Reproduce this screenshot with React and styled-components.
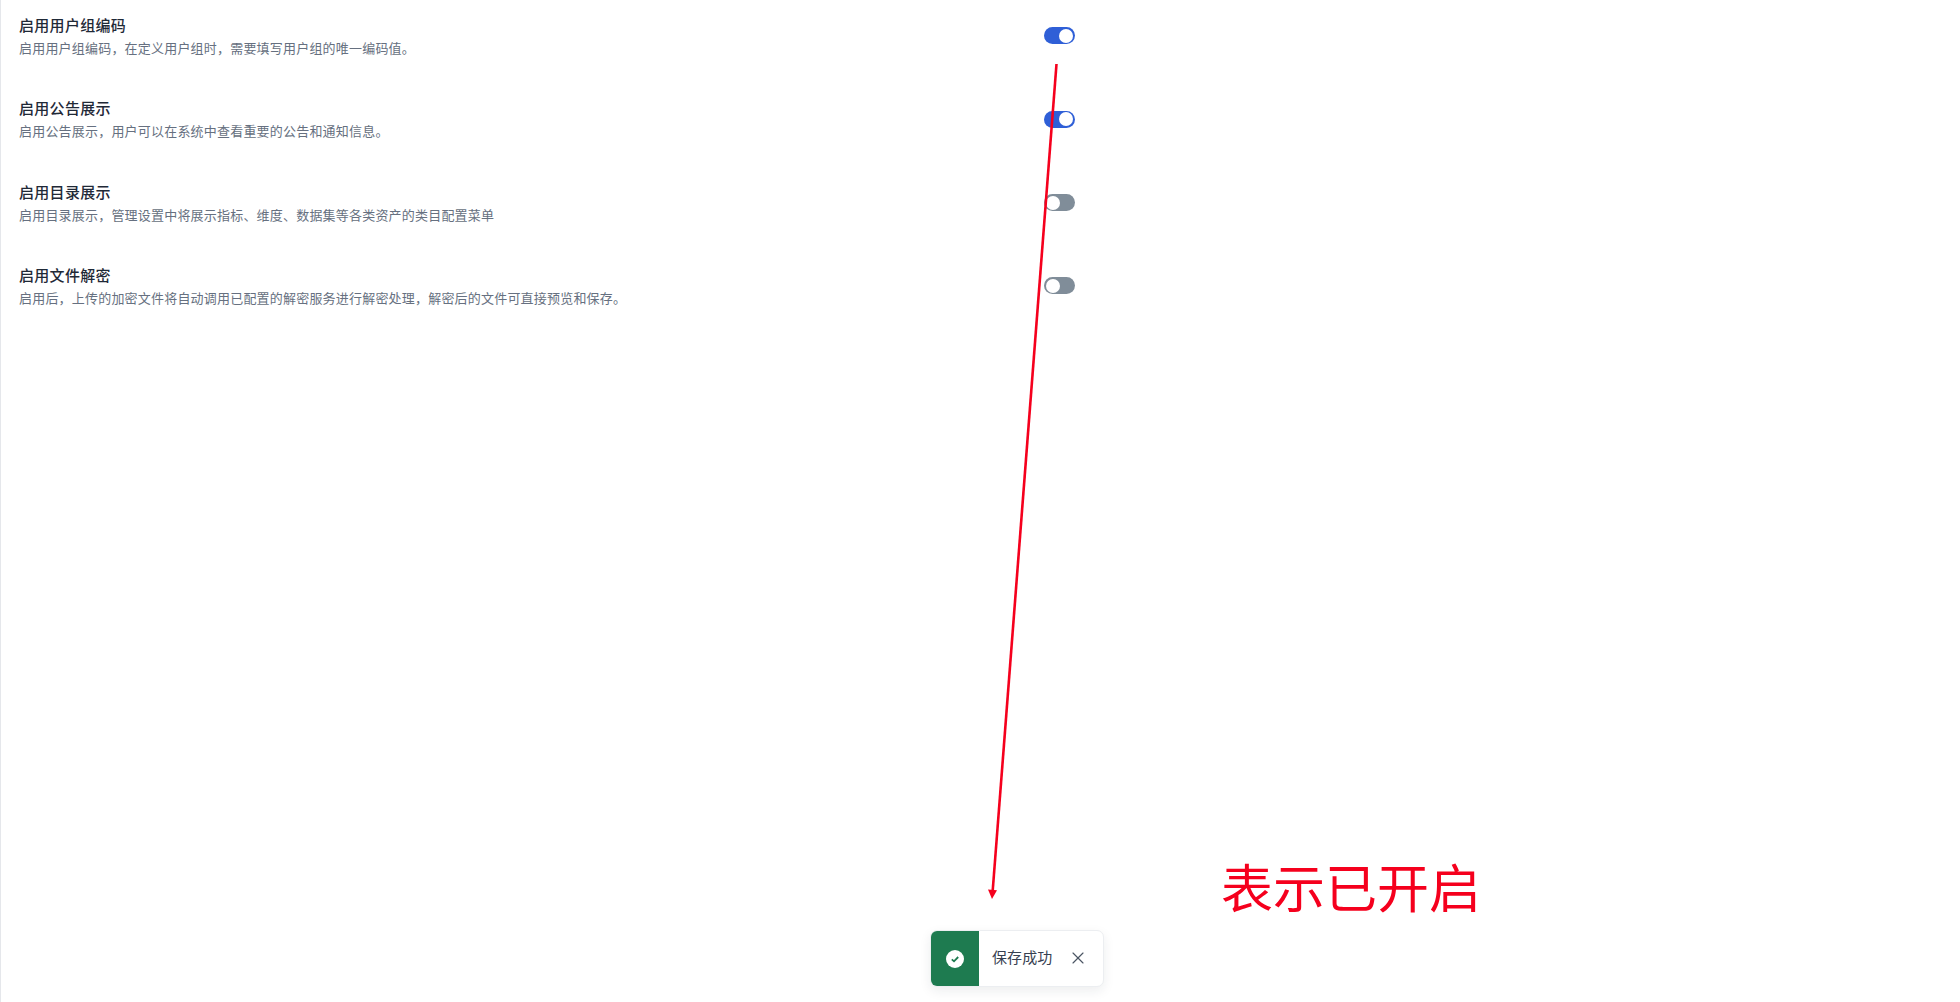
import React from 'react';
import styled, { createGlobalStyle } from 'styled-components';
import { X } from 'lucide-react';

const Global = createGlobalStyle`
  html, body { margin: 0; padding: 0; height: 100%; background: #fff; }
  body { font-family: Inter, "Noto Sans CJK SC", "Liberation Sans", sans-serif; overflow: hidden; }
`;
const Page = styled.div`
  position: relative; width: 1960px; height: 1002px; box-sizing: border-box;
  border-left: 1px solid #e5e7eb; background: #fff; overflow: hidden;
`;
const List = styled.div`
  display: flex; flex-direction: column; width: 1074px; box-sizing: border-box;
  padding: 13.8px 0 0 18px; gap: 39.4px;
`;
const Row = styled.div`
  display: flex; align-items: flex-start; justify-content: space-between; height: 44px;
`;
const Info = styled.div`display: flex; flex-direction: column;`;
const Title = styled.div`
  font-size: 15px; line-height: 23px; font-weight: 500; color: #1f2937; letter-spacing: .3px;
`;
const Desc = styled.div`
  margin-top: 1px; font-size: 13px; line-height: 21px; color: #667080; letter-spacing: .2px;
`;
const Toggle = styled.div`
  flex: none; align-self: center; width: 31px; height: 17px; box-sizing: border-box; border-radius: 9px;
  padding: 1.5px 2px; display: flex; justify-content: ${p => (p.$on ? 'flex-end' : 'flex-start')};
  background: ${p => (p.$on ? '#2f5fd7' : '#808d99')};
`;
const Knob = styled.span`
  width: 14px; height: 14px; border-radius: 50%; background: #fff; display: block;
`;
const Overlay = styled.svg`
  position: absolute; left: 0; top: 0; pointer-events: none;
`;
const Annotation = styled.div`
  position: absolute; left: 1220px; top: 851px; font-size: 52px; line-height: 70px;
  font-weight: 400; color: #f5001d; white-space: nowrap;
  font-family: "Noto Sans CJK SC", sans-serif;
`;
const Toast = styled.div`
  position: absolute; left: 929px; top: 930px; width: 174px; height: 57px; box-sizing: border-box;
  display: flex; align-items: center; background: #fff; border: 1px solid #eceef1; border-radius: 7px;
  box-shadow: 0 4px 12px rgba(31, 41, 55, .08); overflow: hidden;
`;
const ToastIcon = styled.div`
  flex: none; width: 49px; height: 57px; margin: -2px 0 -2px -1px; background: #1e7b50;
  display: flex; align-items: center; justify-content: center;
`;
const ToastText = styled.span`
  margin: -4px 0 0 13px; font-size: 15px; letter-spacing: .1px; color: #374151; white-space: nowrap;
`;
const CloseButton = styled.span`
  display: flex; margin: -2px 0 0 16px; color: #4b5563;
`;

const rows = [
  ['启用用户组编码', '启用用户组编码，在定义用户组时，需要填写用户组的唯一编码值。', true],
  ['启用公告展示', '启用公告展示，用户可以在系统中查看重要的公告和通知信息。', true],
  ['启用目录展示', '启用目录展示，管理设置中将展示指标、维度、数据集等各类资产的类目配置菜单', false],
  ['启用文件解密', '启用后，上传的加密文件将自动调用已配置的解密服务进行解密处理，解密后的文件可直接预览和保存。', false],
];

export default function App() {
  return (
    <Page>
      <Global />
      <List>
        {rows.map(([t, d, on]) => (
          <Row key={t}>
            <Info>
              <Title>{t}</Title>
              <Desc>{d}</Desc>
            </Info>
            <Toggle $on={on}><Knob /></Toggle>
          </Row>
        ))}
      </List>
      <Overlay width="1960" height="1002" viewBox="0 0 1960 1002">
        <line x1="1055.5" y1="64" x2="991.6" y2="892" stroke="#f5001d" strokeWidth="2.6" />
        <path d="M987 889.5 L996 890.2 L991 899 Z" fill="#f5001d" />
      </Overlay>
      <Annotation>表示已开启</Annotation>
      <Toast>
        <ToastIcon>
          <svg width="18" height="18" viewBox="0 0 18 18">
            <circle cx="9" cy="9" r="9" fill="#fff" />
            <path d="M5.8 9.3 L8 11.3 L12.2 7" fill="none" stroke="#1e7b50" strokeWidth="1.8" />
          </svg>
        </ToastIcon>
        <ToastText>保存成功</ToastText>
        <CloseButton><X size={20} strokeWidth={1.4} /></CloseButton>
      </Toast>
    </Page>
  );
}
